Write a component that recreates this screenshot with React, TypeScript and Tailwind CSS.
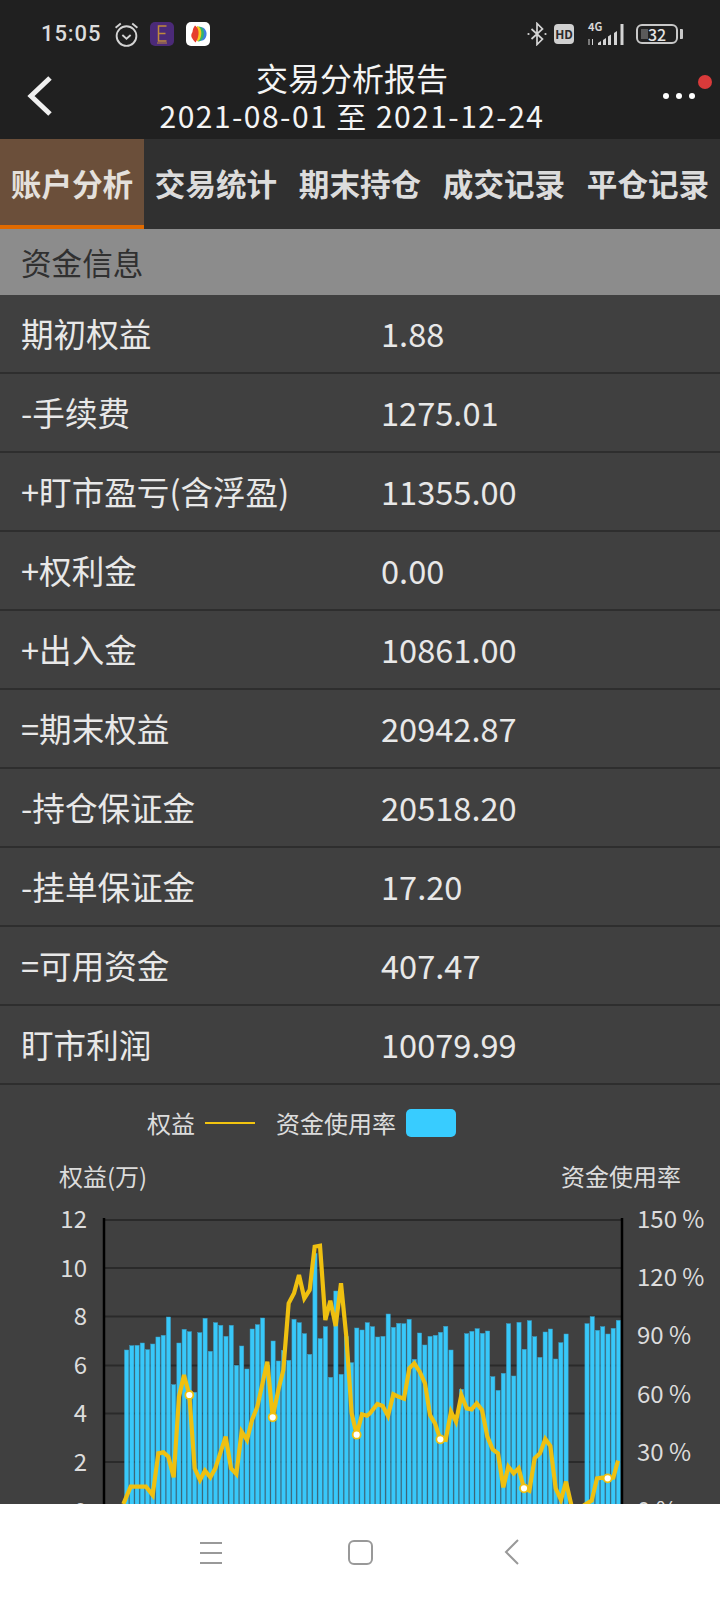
const ROWS = [
  ['期初权益', '1.88'],
  ['-手续费', '1275.01'],
  ['+盯市盈亏(含浮盈)', '11355.00'],
  ['+权利金', '0.00'],
  ['+出入金', '10861.00'],
  ['=期末权益', '20942.87'],
  ['-持仓保证金', '20518.20'],
  ['-挂单保证金', '17.20'],
  ['=可用资金', '407.47'],
  ['盯市利润', '10079.99'],
]

const TABS = ['账户分析', '交易统计', '期末持仓', '成交记录', '平仓记录']

// bar tops, measured in 3x crop units: real y = 1080 + v / 3
const BAR_TOPS: (number | null)[] = [
  810, 797, 796, 789, 809, 792, 771, 766, 711, 914, 789, 748, 755, 937, 758, 715, 814, 728, 736, 769, 736, 856, 798,
  867, 747, 734, 714, 855, 783, 843, 811, 841, 718, 728, 761, 823, 520, 776, 740, 892, 633, 883, 770, 848, 744, 750,
  728, 740, 771, 769, 702, 742, 730, 731, 718, 838, 759, 795, 769, 766, 757, 739, 810, 1020, 928, 761, 754, 746, 760,
  753, 890, 931, 880, 731, 888, 727, 808, 722, 770, 832, 756, 747, 837, 788, 762, null, null, null, 731, 710, 751, 740,
  762, 745, 721,
]

const LINE_A = [
  [40, 792], [62, 740], [108, 740], [128, 765], [145, 640], [160, 637], [175, 650], [191, 712], [207, 470], [222, 405],
  [238, 465], [254, 685], [270, 720], [285, 692], [301, 712], [316, 685], [347, 590], [363, 685], [379, 702], [395, 575],
  [411, 600], [426, 540], [442, 500], [472, 365], [488, 532], [505, 450], [520, 390], [536, 190], [552, 160], [567, 105],
  [583, 175], [599, 150], [614, 20], [630, 17], [646, 240], [661, 182], [677, 258], [693, 130], [709, 290], [725, 520],
  [740, 584], [756, 523], [771, 527],
]
const LINE_B = [
  [0, 520], [22, 492], [38, 498], [54, 528], [70, 463], [85, 470], [102, 476], [118, 385], [133, 370], [149, 395],
  [165, 430], [180, 525], [195, 550], [211, 598], [227, 600], [243, 515], [258, 545], [274, 465], [290, 505], [305, 508],
  [320, 490], [336, 510], [352, 590], [368, 628], [384, 640], [400, 742], [415, 680], [431, 700], [446, 685], [462, 745],
  [478, 752], [494, 655], [510, 640], [526, 597], [541, 618], [557, 745], [573, 780], [588, 725], [604, 795], [620, 840],
  [643, 795], [665, 782], [681, 715], [697, 713], [713, 715], [730, 713], [744, 662],
]

const LINE_POINTS = [
  ...LINE_A.map(([x, y]) => [110 + x / 3, 1240 + y / 3]),
  ...LINE_B.map(([x, y]) => [370 + x / 3, 1240 + y / 3]),
]
const DOTS = [
  [110 + 238 / 3, 1240 + 465 / 3],
  [110 + 488 / 3, 1240 + 532 / 3],
  [110 + 740 / 3, 1240 + 584 / 3],
  [370 + 211 / 3, 1240 + 598 / 3],
  [370 + 462 / 3, 1240 + 745 / 3],
  [370 + 713 / 3, 1240 + 715 / 3],
]

const GRID_Y = [1220, 1268, 1316.5, 1365.5, 1413.5, 1462, 1510]
const LEFT_TICKS = ['12', '10', '8', '6', '4', '2', '0']
const RIGHT_TICKS = ['150 %', '120 %', '90 %', '60 %', '30 %', '0 %']

function Chart() {
  return (
    <svg viewBox="0 1200 720 320" className="block w-[720px] h-[320px] shrink-0">
      {GRID_Y.map((y) => (
        <line key={y} x1="104" x2="622" y1={y} y2={y} stroke="#2a2a2a" strokeWidth="2" />
      ))}
      {BAR_TOPS.map((top, i) => {
        if (top === null) return null
        const y = 1080 + top / 3
        return (
          <rect
            key={i}
            x={124.5 + i * 5.232}
            y={y}
            width="4.2"
            height={1510 - y}
            fill="#38ccff"
            fillOpacity="0.97"
            stroke="#3a9cc4"
            strokeWidth="0.5"
          />
        )
      })}
      <line x1="104" x2="104" y1="1218" y2="1520" stroke="#000" strokeWidth="2.5" />
      <line x1="622" x2="622" y1="1218" y2="1520" stroke="#000" strokeWidth="2.5" />
      <polyline
        points={LINE_POINTS.map((p) => p.join(',')).join(' ')}
        fill="none"
        stroke="#efc010"
        strokeWidth="4.2"
      />
      {DOTS.map(([x, y]) => (
        <circle key={x} cx={x} cy={y} r="4" fill="#fff" stroke="#efc010" strokeWidth="1.8" />
      ))}
      {LEFT_TICKS.map((t, i) => (
        <text key={t} x="87" y={1219 + i * 48.6 + 9} textAnchor="end" fontSize="24" fill="#dcdcdc">
          {t}
        </text>
      ))}
      {RIGHT_TICKS.map((t, i) => (
        <text key={t} x="637" y={1219 + i * 58.2 + 9} fontSize="24" fill="#dcdcdc">
          {t}
        </text>
      ))}
    </svg>
  )
}

function StatusLeftIcons() {
  return (
    <div className="flex items-center ml-[13px]">
      <svg viewBox="0 0 24 26" className="w-[25px] h-[27px]" fill="none" stroke="#d4d4d4" strokeWidth="1.8">
        <circle cx="12" cy="14.5" r="9.5" />
        <path d="M8 13.5l4 3.5 4-3.5" />
        <path d="M1.500 6.500l5-4M22.500 6.500l-5-4" />
      </svg>
      <div className="w-[24px] h-[24px] ml-[11px] rounded-[5px] bg-[#4b2a78] flex items-center justify-center">
        <svg viewBox="0 0 24 24" className="w-[24px] h-[24px]" fill="none" stroke="#c08a3c" strokeWidth="1.5">
          <path d="M16.500 4H8.500v15h8M8.500 11.500h7" />
          <path d="M7 21h10" strokeWidth="1" />
        </svg>
      </div>
      <div className="w-[24px] h-[24px] ml-[12px] rounded-[5px] bg-white overflow-hidden">
        <svg viewBox="0 0 24 24" className="w-[24px] h-[24px]">
          <path d="M14 5c5 0 8 5 6 10-1 3-4 4-7 4z" fill="#3f7fe0" />
          <path d="M12.500 4.500c5 0 6 6 5 10-1 3-3 5-5.500 5z" fill="#35b56a" />
          <path d="M11 4c4 1 5 6 4 10-.6 3-2 5-4 5.500z" fill="#f6c81e" />
          <path d="M9 3.500c2.500 1.500 4 5 3.500 9-.3 3-1.500 6-3 8-1.500-1.500-3-3.500-4-5.500-.5-2 0-3.500 1-5 .2-2.500 1-4.500 2.500-6.500z" fill="#e63c2c" />
        </svg>
      </div>
    </div>
  )
}

function StatusRightIcons() {
  return (
    <div className="flex items-center">
      <svg viewBox="0 0 20 24" className="w-[20px] h-[24px]" fill="none" stroke="#d4d4d4" strokeWidth="1.7">
        <path d="M4.500 7l11 10-5.500 5.500V1.500L15.500 7l-11 10" />
        <circle cx="1.500" cy="12" r="1.100" fill="#d4d4d4" stroke="none" />
        <circle cx="18.500" cy="12" r="1.100" fill="#d4d4d4" stroke="none" />
      </svg>
      <div className="w-[20px] h-[20px] ml-[7px] rounded-[4px] bg-[#d0d0d0] text-[#2a2a2a] text-[12px] leading-[20px] font-bold text-center">
        HD
      </div>
      <div className="relative w-[38px] h-[24px] ml-[13px]">
        <span className="absolute left-[1px] top-[-3px] text-[11px] leading-[14px] font-bold text-[#d4d4d4]">4G</span>
        <svg viewBox="0 0 38 24" className="absolute inset-0 w-[38px] h-[24px]" fill="#d4d4d4">
          <path d="M1.500 17h1v6h-1zM5 17h1v6h-1z" />
          <path d="M11 21l3-2v4h-3zM16 18l3-2v7h-3zM21 14.500l3-2V23h-3zM27 11l3-2v14h-3zM33.500 2h3v21h-3z" />
        </svg>
      </div>
      <div className="relative w-[42px] h-[20px] ml-[11px] rounded-[6px] border-2 border-[#c8c8c8] flex items-center justify-center">
        <div className="absolute left-[3px] top-[3px] bottom-[3px] w-[7px] bg-[#5a5a5a]" />
        <span className="relative text-[16px] leading-[16px] font-medium text-[#e4e4e4]">32</span>
        <div className="absolute right-[-7px] top-[3px] w-[3px] h-[10px] rounded-r-[1px] bg-[#c8c8c8]" />
      </div>
    </div>
  )
}

export default function App() {
  return (
    <div className="w-[720px] h-[1600px] flex flex-col overflow-hidden bg-[#404040] font-['Noto_Sans_CJK_SC',sans-serif]">
      {/* status bar + title */}
      <header className="h-[139px] shrink-0 bg-[#202020] relative">
        <div className="h-[58px] pt-[10px] pl-[41px] pr-[42px] flex items-center justify-between">
          <div className="flex items-center">
            <span className="w-[60px] text-[22px] leading-[28px] font-medium tracking-[0.9px] font-['Roboto',sans-serif] text-[#dcdcdc]">
              15:05
            </span>
            <StatusLeftIcons />
          </div>
          <StatusRightIcons />
        </div>
        <div className="flex flex-col items-center text-[#f4f4f4] -mt-[1px] mr-[16px]">
          <div className="text-[32px] leading-[40px]">交易分析报告</div>
          <div className="text-[30px] leading-[38px] -mt-[1px] tracking-[1.45px]">2021-08-01 至 2021-12-24</div>
        </div>
        <svg viewBox="0 0 28 44" className="absolute left-[26px] top-[74px] w-[28px] h-[44px]" fill="none" stroke="#f0f0f0" strokeWidth="5">
          <path d="M24 4L5 22l19 18" />
        </svg>
        <div className="absolute left-[663px] top-[93px] flex gap-[7px]">
          <span className="w-[6px] h-[6px] rounded-full bg-white" />
          <span className="w-[6px] h-[6px] rounded-full bg-white" />
          <span className="w-[6px] h-[6px] rounded-full bg-white" />
        </div>
        <span className="absolute left-[698px] top-[75px] w-[14px] h-[14px] rounded-full bg-[#d93a3a]" />
      </header>

      {/* tabs */}
      <nav className="h-[90px] shrink-0 flex bg-[#303030]">
        {TABS.map((tab, i) => (
          <div
            key={tab}
            className={
              i === 0
                ? 'w-[144px] flex items-center justify-center pt-[4px] text-[30.6px] font-bold text-[#e4e0dc] bg-[#6b4f3a] border-b-4 border-[#e06a00]'
                : 'w-[144px] flex items-center justify-center pt-[4px] text-[30.6px] font-bold text-[#dcdcdc] border-b-4 border-transparent'
            }
          >
            {tab}
          </div>
        ))}
      </nav>

      <main className="flex-1 min-h-0 overflow-hidden">
        <div className="h-[66px] bg-[#8c8c8c] pl-[21px] pt-[1px] flex items-center text-[30.6px] text-[#303030]">资金信息</div>
        {ROWS.map(([label, value]) => (
          <div key={label} className="h-[79px] flex items-center pl-[21px] border-b-2 border-[#2e2e2e] text-[32.6px] text-[#e8e8e8]">
            <span className="w-[360px]">{label}</span>
            <span>{value}</span>
          </div>
        ))}

        {/* chart legend */}
        <div className="h-[76px] flex items-center pl-[147px] text-[24px] text-[#dcdcdc]">
          <span>权益</span>
          <span className="w-[50px] h-[2px] ml-[10px] bg-[#f2c40f]" />
          <span className="ml-[21px]">资金使用率</span>
          <span className="w-[50px] h-[28px] ml-[10px] rounded-[5px] bg-[#38ccff]" />
        </div>
        <div className="h-[39px] flex items-start justify-between pl-[59px] pr-[39px] text-[24px] leading-[29px] text-[#dcdcdc]">
          <span>权益(万)</span>
          <span>资金使用率</span>
        </div>
        <Chart />
      </main>

      {/* android nav bar */}
      <footer className="h-[96px] shrink-0 bg-white flex items-center justify-center">
        <svg viewBox="0 0 720 96" className="w-[720px] h-[96px]" fill="none" stroke="#999" strokeWidth="2">
          <path d="M200 39h22M200 49h22M200 59h22" />
          <rect x="349" y="37" width="23" height="23" rx="5" />
          <path d="M518 36L506 48l12 12" />
        </svg>
      </footer>
    </div>
  )
}
